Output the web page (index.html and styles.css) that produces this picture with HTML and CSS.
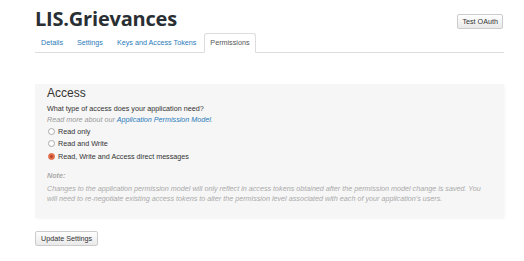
FILE: index.html
```html
<!DOCTYPE html>
<html lang="en">

<head>
  <meta charset="UTF-8">
  <title>LIS.Grievances - Permissions</title>
  <link rel="stylesheet" href="styles.css">
</head>

<body>
  <div class="page">
    <!-- App header -->
    <div class="app-header">
      <h1 class="app-title">LIS.Grievances</h1>
      <button class="btn btn-small">Test OAuth</button>
    </div>

    <ul class="tabs">
      <li><a href="#">Details</a></li>
      <li><a href="#">Settings</a></li>
      <li><a href="#">Keys and Access Tokens</a></li>
      <li class="active"><a href="#">Permissions</a></li>
    </ul>

    <!-- Access form -->
    <div class="panel">
      <h2 class="panel-title">Access</h2>
      <p class="question">What type of access does your application need?</p>
      <p class="hint">Read more about our <a href="#">Application Permission Model</a>.</p>

      <label class="radio"><input type="radio" name="access"> Read only</label>
      <label class="radio"><input type="radio" name="access"> Read and Write</label>
      <label class="radio"><input type="radio" name="access" checked> Read, Write and Access direct messages</label>

      <p class="note-title">Note:</p>
      <p class="note">Changes to the application permission model will only reflect in access tokens obtained after the permission model change is saved. You will need to re-negotiate existing access tokens to alter the permission level associated with each of your application's users.</p>
    </div>

    <button class="btn">Update Settings</button>
  </div>
</body>

</html>
```

FILE: styles.css
```css
body,
html {
  margin: 0;
  padding: 0;
  background-color: #fff;
}

body {
  font-family: "Liberation Sans", Arial, sans-serif;
  font-size: 7.2px;
  color: #333;
}

.page {
  width: 469px;
  padding: 6px 0 0 35px;
}

.app-header {
  display: flex;
  justify-content: space-between;
  align-items: flex-start;
  height: 27px;
}

.app-title {
  margin: 0;
  font-family: "Open Sans", "Liberation Sans", sans-serif;
  font-size: 20px;
  font-weight: 700;
  line-height: 26px;
  color: #292f33;
  letter-spacing: -0.2px;
}

.btn {
  display: inline-block;
  padding: 0 5px;
  height: 15px;
  border: 1px solid #ccc;
  border-radius: 2px;
  background: linear-gradient(#fff, #e9e9e9);
  font-family: "Liberation Sans", Arial, sans-serif;
  font-size: 7.2px;
  color: #333;
  line-height: 13px;
  cursor: pointer;
}

.btn-small {
  margin-top: 8px;
  margin-right: 1px;
  padding: 0 4px;
}

.tabs {
  display: flex;
  margin: 0;
  padding: 0;
  list-style: none;
  border-bottom: 1px solid #ddd;
  height: 19px;
}

.tabs li {
  margin-bottom: -1px;
}

.tabs a {
  display: block;
  padding: 0 5px;
  line-height: 18px;
  border: 1px solid transparent;
  border-radius: 3px 3px 0 0;
  color: #2b7bb9;
  text-decoration: none;
}

.tabs li + li {
  margin-left: 2px;
}

.tabs .active a {
  border-color: #ddd;
  border-bottom-color: #fff;
  background: #fff;
  color: #555;
}

.panel {
  margin-top: 31px;
  padding: 2px 12px 14px;
  background: #f6f6f6;
  box-shadow: 1px 1px 2px rgba(0, 0, 0, 0.04);
}

.panel-title {
  margin: 0;
  font-size: 12px;
  font-weight: normal;
  line-height: 15px;
  color: #333;
}

.question {
  margin: 3px 0 0;
  line-height: 10px;
}

.hint {
  margin: 1px 0 0;
  line-height: 10px;
  font-style: italic;
  color: #999;
}

.hint a {
  color: #2b7bb9;
  text-decoration: none;
}

.radio {
  display: flex;
  align-items: center;
  gap: 3px;
  height: 12.5px;
}

.radio input {
  appearance: none;
  -webkit-appearance: none;
  box-sizing: border-box;
  width: 7px;
  height: 7px;
  margin: 0 0 0 1px;
  border: 1px solid #aaa;
  border-radius: 50%;
  background: #fff;
}

.radio input:checked {
  border-color: #d9603a;
  background: radial-gradient(circle, #b8472a 0 1.2px, #e8734d 1.6px);
}

.note-title {
  margin: 8px 0 0;
  font-weight: bold;
  font-style: italic;
  color: #aaa;
  line-height: 10px;
}

.note {
  margin: 3px 0 0;
  font-style: italic;
  color: #aaa;
  line-height: 10px;
}

.panel + .btn {
  margin-top: 13px;
}
```
